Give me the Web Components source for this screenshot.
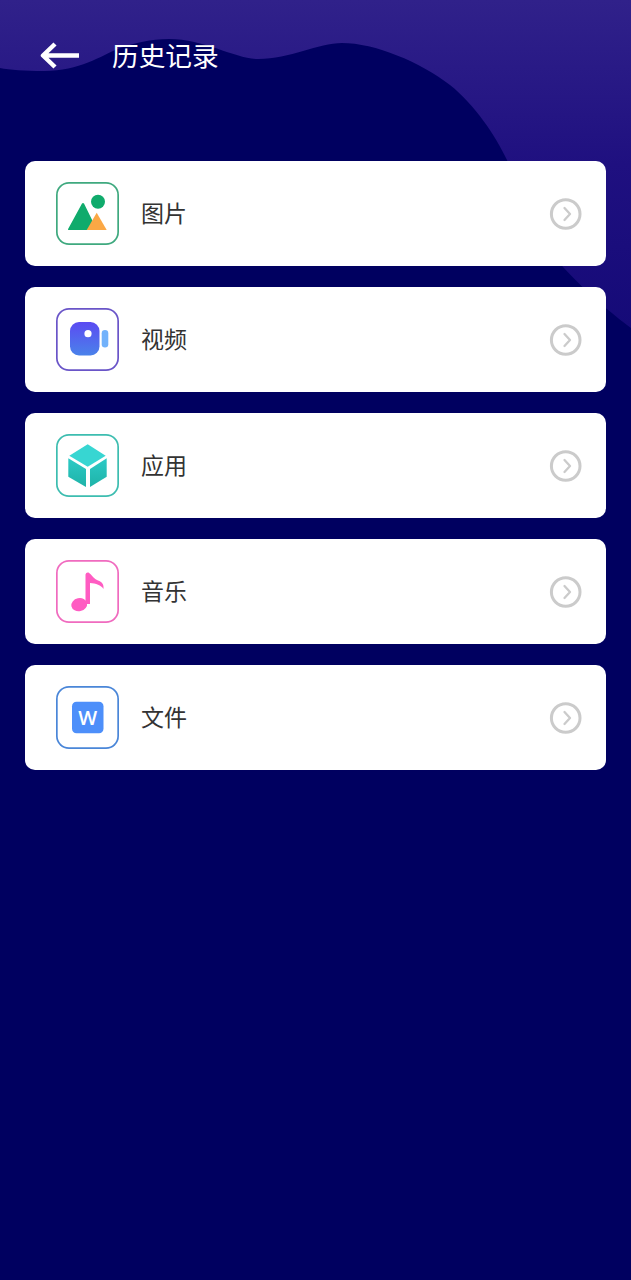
<!DOCTYPE html>
<html lang="zh">
<head>
<meta charset="utf-8">
<title>历史记录</title>
<style>
  html, body { margin: 0; padding: 0; background: #000060; }
</style>
</head>
<body>
<history-page>
  <history-bar slot="bar">历史记录</history-bar>
  <history-row>
    <svg slot="icon" width="60" height="60" viewBox="0 0 60 60">
      <circle cx="40" cy="17.700" r="7" fill="#10ab6c"/>
      <path d="M24 19.500Q25 18.500 26 19.500L39 46H10.600a.6.6 0 0 1-.5-.9Z" fill="#10ab6c"/>
      <path d="M38.700 28.700L48.700 46H28.700Z" fill="#fba845"/>
    </svg>
    图片
  </history-row>
  <history-row color="#6a55c8">
    <svg slot="icon" width="60" height="60" viewBox="0 0 60 60">
      <defs><linearGradient id="v" x1="0" y1="0" x2="0" y2="1"><stop offset="0" stop-color="#5b4bf2"/><stop offset="1" stop-color="#4a82ea"/></linearGradient></defs>
      <rect x="12" y="12" width="29.500" height="33.500" rx="9" fill="url(#v)"/>
      <circle cx="30" cy="23.700" r="3.600" fill="#fff"/>
      <rect x="43.700" y="20" width="6.600" height="17.500" rx="3.300" fill="#72b2fb"/>
    </svg>
    视频
  </history-row>
  <history-row color="#3dbdb0">
    <svg slot="icon" width="60" height="60" viewBox="0 0 60 60">
      <defs><linearGradient id="c" x1="0" y1="0" x2="0" y2="1"><stop offset="0" stop-color="#2ccac6"/><stop offset="1" stop-color="#1fb3a8"/></linearGradient></defs>
      <path d="M29.700 8.300L47.700 19.700L29.700 30.700L11.300 19.700Z" fill="#37d6d2"/>
      <path d="M10.300 22.300L28 33V51L10.300 40.700Z" fill="url(#c)"/>
      <path d="M32 33L48.700 22.300V40.700L32 51Z" fill="url(#c)"/>
    </svg>
    应用
  </history-row>
  <history-row color="#f06bbf">
    <svg slot="icon" width="60" height="60" viewBox="0 0 60 60">
      <ellipse cx="21.200" cy="42.700" rx="8" ry="6.500" transform="rotate(-12 21.200 42.700)" fill="#ff5cc2"/>
      <path d="M27.500 42V12.500Q28 10 30.500 10.500C34 13 36 17 40 18.500C44 20 46 22 45.500 27C43 23 38 21.500 32 21V42Z" fill="#ff5cc2"/>
    </svg>
    音乐
  </history-row>
  <history-row color="#4a86d8">
    <svg slot="icon" width="60" height="60" viewBox="0 0 60 60">
      <rect x="14" y="13.700" width="31.500" height="31.500" rx="4.500" fill="#4d8ffa"/>
      <text x="29.800" y="37" text-anchor="middle" font-family="'Open Sans', sans-serif" font-weight="600" font-size="20" fill="#fff">W</text>
    </svg>
    文件
  </history-row>
</history-page>

<script>
(function() {
  class HistoryPage extends HTMLElement {
    constructor() {
      super();
      this.attachShadow({mode: 'open'}).innerHTML = `
<style>
  :host {
    display: block;
    position: relative;
    width: 631px;
    height: 1280px;
    overflow: hidden;
    background: #000060;
  }
  #wave { position: absolute; left: 0; top: 0; }
  #content { position: relative; display: flex; flex-direction: column; }
  #list {
    display: flex;
    flex-direction: column;
    gap: 21px;
    padding: 50px 25px 0 25px;
  }
</style>
<svg id="wave" width="631" height="340" viewBox="0 0 631 340">
  <defs>
    <linearGradient id="top" x1="0" y1="0" x2="0" y2="1">
      <stop offset="0" stop-color="#30218a"/>
      <stop offset="0.5" stop-color="#1f1080"/>
      <stop offset="1" stop-color="#150a78"/>
    </linearGradient>
  </defs>
  <path fill="url(#top)" d="M0 0H631V328C610 312 590 296 563 267C535 230 525 200 507 160C495 135 475 105 450 85C420 62 375 43 342 43C318 43 290 59 258 59C235 59 205 39 169 39C150 39 135 43 120 48C100 56 80 71 44 71C25 71 10 70 0 68Z"/>
</svg>
<div id="content">
  <slot name="bar"></slot>
  <div id="list"><slot></slot></div>
</div>`;
    }
  }

  class HistoryBar extends HTMLElement {
    constructor() {
      super();
      this.attachShadow({mode: 'open'}).innerHTML = `
<style>
  :host {
    display: flex;
    align-items: center;
    height: 111px;
    padding: 0 0 0 40px;
    box-sizing: border-box;
    color: #fff;
    font: 26.700px "Noto Sans CJK SC", "Liberation Sans", sans-serif;
  }
  #head { display: flex; align-items: center; gap: 33px; }
  #head span { margin-top: -2px; }
  svg { display: block; }
</style>
<div id="head">
  <svg width="39" height="28" viewBox="0 0 39 28">
    <path d="M15 2L3 13.500L15 25M4 13.500H39" fill="none" stroke="#fff" stroke-width="4.500" stroke-linejoin="round"/>
  </svg>
  <span><slot></slot></span>
</div>`;
    }
  }

  class HistoryRow extends HTMLElement {
    constructor() {
      super();
      this.attachShadow({mode: 'open'}).innerHTML = `
<style>
  :host {
    display: flex;
    align-items: center;
    height: 105px;
    padding: 0 23px 0 31px;
    box-sizing: border-box;
    background: #fff;
    border-radius: 10px;
    color: #333;
    font: 23px "Noto Sans CJK SC", "Liberation Sans", sans-serif;
  }
  #icon {
    width: 63px;
    height: 63px;
    padding: 2px;
    box-sizing: border-box;
    box-shadow: inset 0 0 0 1.7px var(--ring, #3fa97f);
    border-radius: 13px;
    margin-right: 22px;
    flex: none;
  }
  #icon ::slotted(svg) { display: block; }
  #label { flex: 1; margin-top: -4px; }
  #go { display: block; flex: none; }
</style>
<div id="icon"><slot name="icon"></slot></div>
<div id="label"><slot></slot></div>
<svg id="go" width="34" height="34" viewBox="0 0 34 34">
  <circle cx="16.700" cy="17" r="14.300" fill="none" stroke="#cbcbcb" stroke-width="3"/>
  <path d="M15.500 11L21 17L15.500 23" fill="none" stroke="#cbcbcb" stroke-width="2.300" stroke-linecap="round" stroke-linejoin="round"/>
</svg>`;
    }
    connectedCallback() {
      let c = this.getAttribute('color');
      if (c) this.style.setProperty('--ring', c);
    }
  }

  customElements.define('history-page', HistoryPage);
  customElements.define('history-bar', HistoryBar);
  customElements.define('history-row', HistoryRow);
})();
</script>
</body>
</html>
